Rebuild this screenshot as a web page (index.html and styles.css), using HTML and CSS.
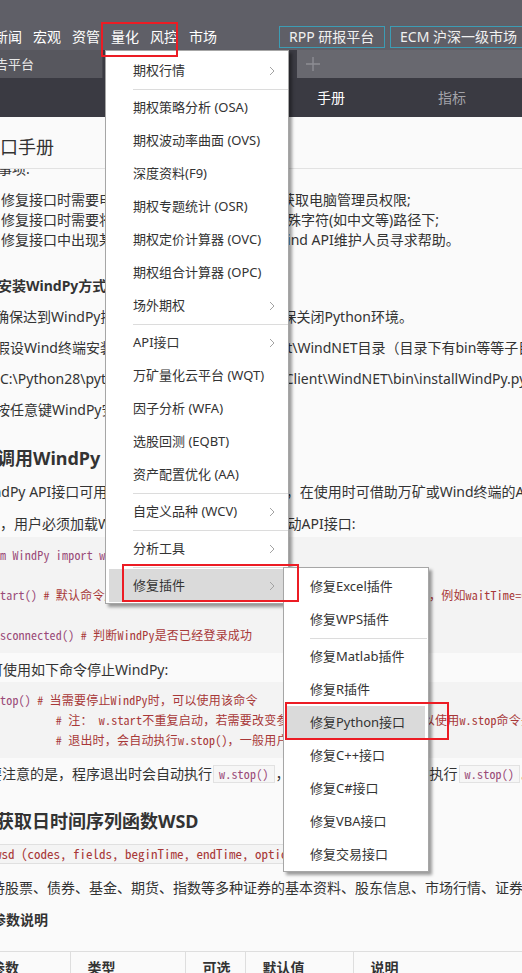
FILE: index.html
```html
<!DOCTYPE html>
<html lang="zh-CN">
<head>
<meta charset="utf-8">
<title>WindPy 接口手册</title>
<link rel="stylesheet" href="styles.css">
</head>
<body>
<div class="app">
  <header class="topbar">
    <nav class="mainnav">
      <span>新闻</span><span>宏观</span><span>资管</span><span>量化</span><span>风控</span><span>市场</span>
    </nav>
    <div class="platforms">
      <span class="plat plat-rpp">RPP 研报平台</span>
      <span class="plat plat-ecm">ECM 沪深一级市场</span>
    </div>
  </header>

  <div class="tabbar">
    <div class="tab tab-inactive"><span class="tab-label">报告平台</span></div>
    <div class="tab tab-active">WindPy接口手册</div>
    <div class="tab-add">
      <svg width="16" height="16" viewBox="0 0 16 16"><path d="M8 1v14M1 8h14" stroke="#8d8d94" stroke-width="1.4" fill="none"/></svg>
    </div>
  </div>

  <div class="subnav">
    <span class="subnav-item is-active">手册</span>
    <span class="subnav-item">指标</span>
  </div>

  <div class="doc-title"><h1>接口手册</h1></div>

  <main class="doc">
    <p class="note-head">注意事项:</p>
    <ul class="notes">
      <li>修复接口时需要电脑管理员权限，请向管理员获取电脑管理员权限;</li>
      <li>修复接口时需要将Wind终端安装在无空格及特殊字符(如中文等)路径下;</li>
      <li>修复接口中出现某些问题无法解决时请联系&ensp;Wind API维护人员寻求帮助。</li>
    </ul>

    <h4 class="sec cut-2">安装WindPy方式</h4>
    <p class="step cut-5">确保达到WindPy接口的安装使用条件后，请确保关闭Python环境。</p>
    <p class="step cut-4">假设Wind终端安装在 C:\Wind\Wind.NET.Client\WindNET目录（目录下有bin等等子目录），</p>
    <p class="step">C:\Python28\python.exe C:\Wind\Wind.NET.Client\WindNET\bin\installWindPy.py C:\Wind\Wind.NET.Client\WindNET</p>
    <p class="step cut-4">按任意键WindPy安装完成。</p>

    <h2 class="h-call">调用WindPy</h2>
    <p class="p-api">WindPy API接口可用于Python环境调用Wind数据，在使用时可借助万矿或Wind终端的API帮助文档</p>
    <p class="p-load">运行时，用户必须加载WindPy模块，并需在代码中启动API接口:</p>

    <pre class="code code-1"><code><span class="kw">from WindPy import w</span>

<span class="kw">w.start()</span> <span class="cm"># 默认命令超时时间为120秒，如需设置超时时间可以加入waitTime参数，例如waitTime=60,即设置超时时间为60秒</span>

<span class="kw">w.isconnected()</span> <span class="cm"># 判断WindPy是否已经登录成功</span></code></pre>

    <p class="p-stop">可使用如下命令停止WindPy:</p>

    <pre class="code code-2"><code><span class="kw">w.stop()</span> <span class="cm"># 当需要停止WindPy时，可以使用该命令</span>
            <span class="cm"># 注： w.start不重复启动，若需要改变参数，如超时时间，用户可以使用w.stop命令先停止后再启动。</span>
            <span class="cm"># 退出时，会自动执行w.stop()，一般用户并不需要执行w.stop()</span></code></pre>

    <p class="p-note">需要注意的是，程序退出时会自动执行<code class="ic">w.stop()</code>，因此用户并不需要手动执行<code class="ic">w.stop()</code>。</p>

    <h3 class="h-wsd">获取日时间序列函数WSD</h3>
    <div class="sig-row"><code class="sig">w.wsd (codes, fields, beginTime, endTime, options)</code></div>
    <p class="p-desc">支持股票、债券、基金、期货、指数等多种证券的基本资料、股东信息、市场行情、证券分析、预测评级、财务数据等各种数据。</p>
    <h4 class="sec-param">参数说明</h4>

    <table class="params">
      <colgroup>
        <col class="c1"><col class="c2"><col class="c3"><col class="c4"><col class="c5">
      </colgroup>
      <thead>
        <tr><th>参数</th><th>类型</th><th>可选</th><th>默认值</th><th>说明</th></tr>
      </thead>
    </table>
  </main>

  <div class="menu menu-main">
    <div class="mi has-sub">期权行情<svg class="chev" width="6" height="10" viewBox="0 0 6 10"><path d="M1 1l4 4-4 4" stroke="#a3a3a3" fill="none"/></svg></div>
    <div class="sep"></div>
    <div class="mi">期权策略分析 (OSA)</div>
    <div class="mi">期权波动率曲面 (OVS)</div>
    <div class="mi">深度资料(F9)</div>
    <div class="mi">期权专题统计 (OSR)</div>
    <div class="mi">期权定价计算器 (OVC)</div>
    <div class="mi">期权组合计算器 (OPC)</div>
    <div class="mi has-sub">场外期权<svg class="chev" width="6" height="10" viewBox="0 0 6 10"><path d="M1 1l4 4-4 4" stroke="#a3a3a3" fill="none"/></svg></div>
    <div class="sep"></div>
    <div class="mi has-sub">API接口<svg class="chev" width="6" height="10" viewBox="0 0 6 10"><path d="M1 1l4 4-4 4" stroke="#a3a3a3" fill="none"/></svg></div>
    <div class="mi">万矿量化云平台 (WQT)</div>
    <div class="mi">因子分析 (WFA)</div>
    <div class="mi">选股回测 (EQBT)</div>
    <div class="mi">资产配置优化 (AA)</div>
    <div class="sep"></div>
    <div class="mi has-sub">自定义品种 (WCV)<svg class="chev" width="6" height="10" viewBox="0 0 6 10"><path d="M1 1l4 4-4 4" stroke="#a3a3a3" fill="none"/></svg></div>
    <div class="sep"></div>
    <div class="mi has-sub">分析工具<svg class="chev" width="6" height="10" viewBox="0 0 6 10"><path d="M1 1l4 4-4 4" stroke="#a3a3a3" fill="none"/></svg></div>
    <div class="sep"></div>
    <div class="mi has-sub is-hover">修复插件<svg class="chev" width="6" height="10" viewBox="0 0 6 10"><path d="M1 1l4 4-4 4" stroke="#a3a3a3" fill="none"/></svg></div>
  </div>

  <div class="menu menu-sub">
    <div class="mi">修复Excel插件</div>
    <div class="mi">修复WPS插件</div>
    <div class="sep"></div>
    <div class="mi">修复Matlab插件</div>
    <div class="mi">修复R插件</div>
    <div class="mi is-hover">修复Python接口</div>
    <div class="mi">修复C++接口</div>
    <div class="mi">修复C#接口</div>
    <div class="mi">修复VBA接口</div>
    <div class="mi">修复交易接口</div>
  </div>

  <div class="mark mark-nav"></div>
  <div class="mark mark-menu"></div>
  <div class="mark mark-sub"></div>
</div>
</body>
</html>
```

FILE: styles.css
```css
* { box-sizing: border-box; margin: 0; padding: 0; }

html, body {
  width: 522px;
  height: 973px;
  overflow: hidden;
  background: #fafafa;
}

body {
  font-family: "Noto Sans", "Noto Sans CJK SC", sans-serif;
  color: #333;
}

.app {
  position: relative;
  width: 522px;
  height: 973px;
  overflow: hidden;
  background: #fafafa;
}

/* ---------- top bar ---------- */
.topbar {
  height: 50px;
  padding-top: 24px;
  background: #5f5f67;
  display: flex;
  align-items: center;
  white-space: nowrap;
}

.mainnav {
  display: flex;
  gap: 11px;
  margin-left: -6px;
  font-size: 14px;
  line-height: 22px;
  color: #fff;
}

.platforms {
  display: flex;
  gap: 5px;
  margin-left: 62px;
}

.plat {
  height: 22px;
  border: 1px solid #3c9cb4;
  padding: 0 0 0 9px;
  font-size: 14px;
  line-height: 20px;
  color: #f0f0f0;
  flex: none;
}
.plat-rpp { width: 106px; }
.plat-ecm { width: 150px; }

/* ---------- tab bar ---------- */
.tabbar {
  height: 28px;
  display: flex;
  background: #68686f;
}

.tab {
  height: 28px;
  font-size: 13px;
  line-height: 28px;
  overflow: hidden;
  white-space: nowrap;
  flex: none;
}

.tab-inactive {
  width: 103px;
  background: #57575e;
  color: #e8e8e8;
  border-right: 1px solid #46464d;
}
.tab-label { display: inline-block; margin-left: -18px; }

.tab-active {
  width: 194px;
  background: #3b3b43;
  color: #fff;
  padding-left: 40px;
}

.tab-add {
  width: 32px;
  height: 28px;
  display: flex;
  align-items: center;
  justify-content: center;
}

/* ---------- sub nav ---------- */
.subnav {
  height: 39px;
  background: #3a3a42;
  display: flex;
  gap: 93px;
  padding-left: 317px;
  font-size: 14px;
  line-height: 39px;
  color: #a3a3a9;
}
.subnav-item.is-active { color: #fff; }

/* ---------- document ---------- */
.doc-title {
  height: 52px;
  padding-top: 17px;
  border-bottom: 1px solid #e2e2e2;
  overflow: hidden;
}
.doc-title h1 {
  font-size: 18px;
  font-weight: 400;
  line-height: 26px;
  margin-left: -18px;
  white-space: nowrap;
}

.doc {
  height: 804px;
  overflow: hidden;
  font-size: 14px;
  line-height: 20px;
  color: #333;
  white-space: nowrap;
}

.note-head { margin-top: -10px; text-indent: -30px; }

.notes { list-style: none; margin-top: 11px; padding-left: 1px; }

.sec {
  font-size: 14px;
  font-weight: 700;
  line-height: 20px;
  margin-top: 26px;
}
.cut-2 { text-indent: -2px; }
.cut-4 { text-indent: -4px; }
.cut-5 { text-indent: -5px; }

.step { margin-top: 11px; }

.h-call {
  font-size: 18px;
  font-weight: 700;
  line-height: 26px;
  margin-top: 25px;
  text-indent: -3px;
}

.p-api { margin-top: 11px; text-indent: -24px; }
.p-load { margin-top: 12px; text-indent: -42px; }

.code {
  background: #f3f3f3;
  font-family: "Noto Sans Mono CJK SC", "DejaVu Sans Mono", monospace;
  font-size: 12px;
  letter-spacing: 0.2px;
  line-height: 20px;
  padding: 8px 0;
  white-space: pre;
  overflow: hidden;
}
.code code { display: block; margin-left: -18.6px; font-family: inherit; }
.code-1 { margin-top: 3px; }
.code-2 { margin-top: 2px; }

.kw { color: #9a4a78; }
.cm { color: #a83838; }

.p-stop { margin-top: 7px; text-indent: -11px; }

.p-note { margin-top: 6px; text-indent: -26px; }

.ic {
  display: inline-block;
  font-family: "Noto Sans Mono CJK SC", "DejaVu Sans Mono", monospace;
  font-size: 12px;
  letter-spacing: 0.2px;
  line-height: 16px;
  padding: 0 5px;
  margin: 0 1px;
  border: 1px solid #e2e2e2;
  background: #f6f6f6;
  color: #9a4a78;
  text-indent: 0;
}

.h-wsd {
  font-size: 18px;
  font-weight: 700;
  line-height: 26px;
  margin-top: 24px;
  text-indent: -4px;
}

.sig-row { margin-top: 10px; height: 20px; }
.sig {
  display: inline-block;
  height: 20px;
  margin-left: -22px;
  padding: 0 6px 0 3px;
  border: 1px solid #e0e0e0;
  background: #f4f4f4;
  font-family: "Noto Sans Mono CJK SC", "DejaVu Sans Mono", monospace;
  font-size: 13px;
  line-height: 18px;
  color: #a83838;
}

.p-desc { margin-top: 14px; text-indent: -23px; }

.sec-param {
  font-size: 14px;
  font-weight: 700;
  line-height: 20px;
  margin-top: 12px;
  text-indent: -8px;
}

.params {
  margin-top: 21px;
  margin-left: -26px;
  border-collapse: collapse;
  table-layout: fixed;
  width: 600px;
}
.params .c1 { width: 96px; }
.params .c2 { width: 115px; }
.params .c3 { width: 60px; }
.params .c4 { width: 108px; }
.params .c5 { width: 221px; }
.params th {
  height: 34px;
  padding: 0 0 0 17px;
  text-align: left;
  font-size: 14px;
  font-weight: 700;
  line-height: 32px;
  vertical-align: top;
  border-top: 1px solid #dedede;
  border-left: 1px solid #dedede;
}
.params th:first-child { border-left: 0; }

/* ---------- context menus ---------- */
.menu {
  position: absolute;
  background: #fff;
  border: 1px solid #a6a6a6;
  box-shadow: 3px 3px 3px rgba(0, 0, 0, 0.38);
  font-size: 13px;
  color: #333;
  white-space: nowrap;
}

.menu-main {
  left: 105px;
  top: 50px;
  width: 184px;
  padding: 3px 0 1px;
}

.menu-sub {
  left: 283px;
  top: 567px;
  width: 146px;
  padding: 2px 0 0;
}

.mi {
  height: 33px;
  line-height: 33px;
  display: flex;
  align-items: center;
}

.menu-main .mi { margin-left: 3px; padding-left: 24px; padding-right: 13px; }
.menu-sub .mi { margin: 0 3px; padding-left: 23px; }

.mi .chev { margin-left: auto; flex: none; }

.mi.is-hover { background: #dadada; }

.sep {
  height: 1px;
  background: #dcdcdc;
  margin: 2px 0 1px 27px;
}
.menu-sub .sep { margin: 2px 1px 1px 26px; }

/* ---------- annotation marks ---------- */
.mark {
  position: absolute;
  border: 2px solid #ec1c24;
}
.mark-nav { left: 101px; top: 22px; width: 77px; height: 35px; }
.mark-menu { left: 122px; top: 564px; width: 177px; height: 38px; }
.mark-sub { left: 285px; top: 702px; width: 164px; height: 38px; }
```
